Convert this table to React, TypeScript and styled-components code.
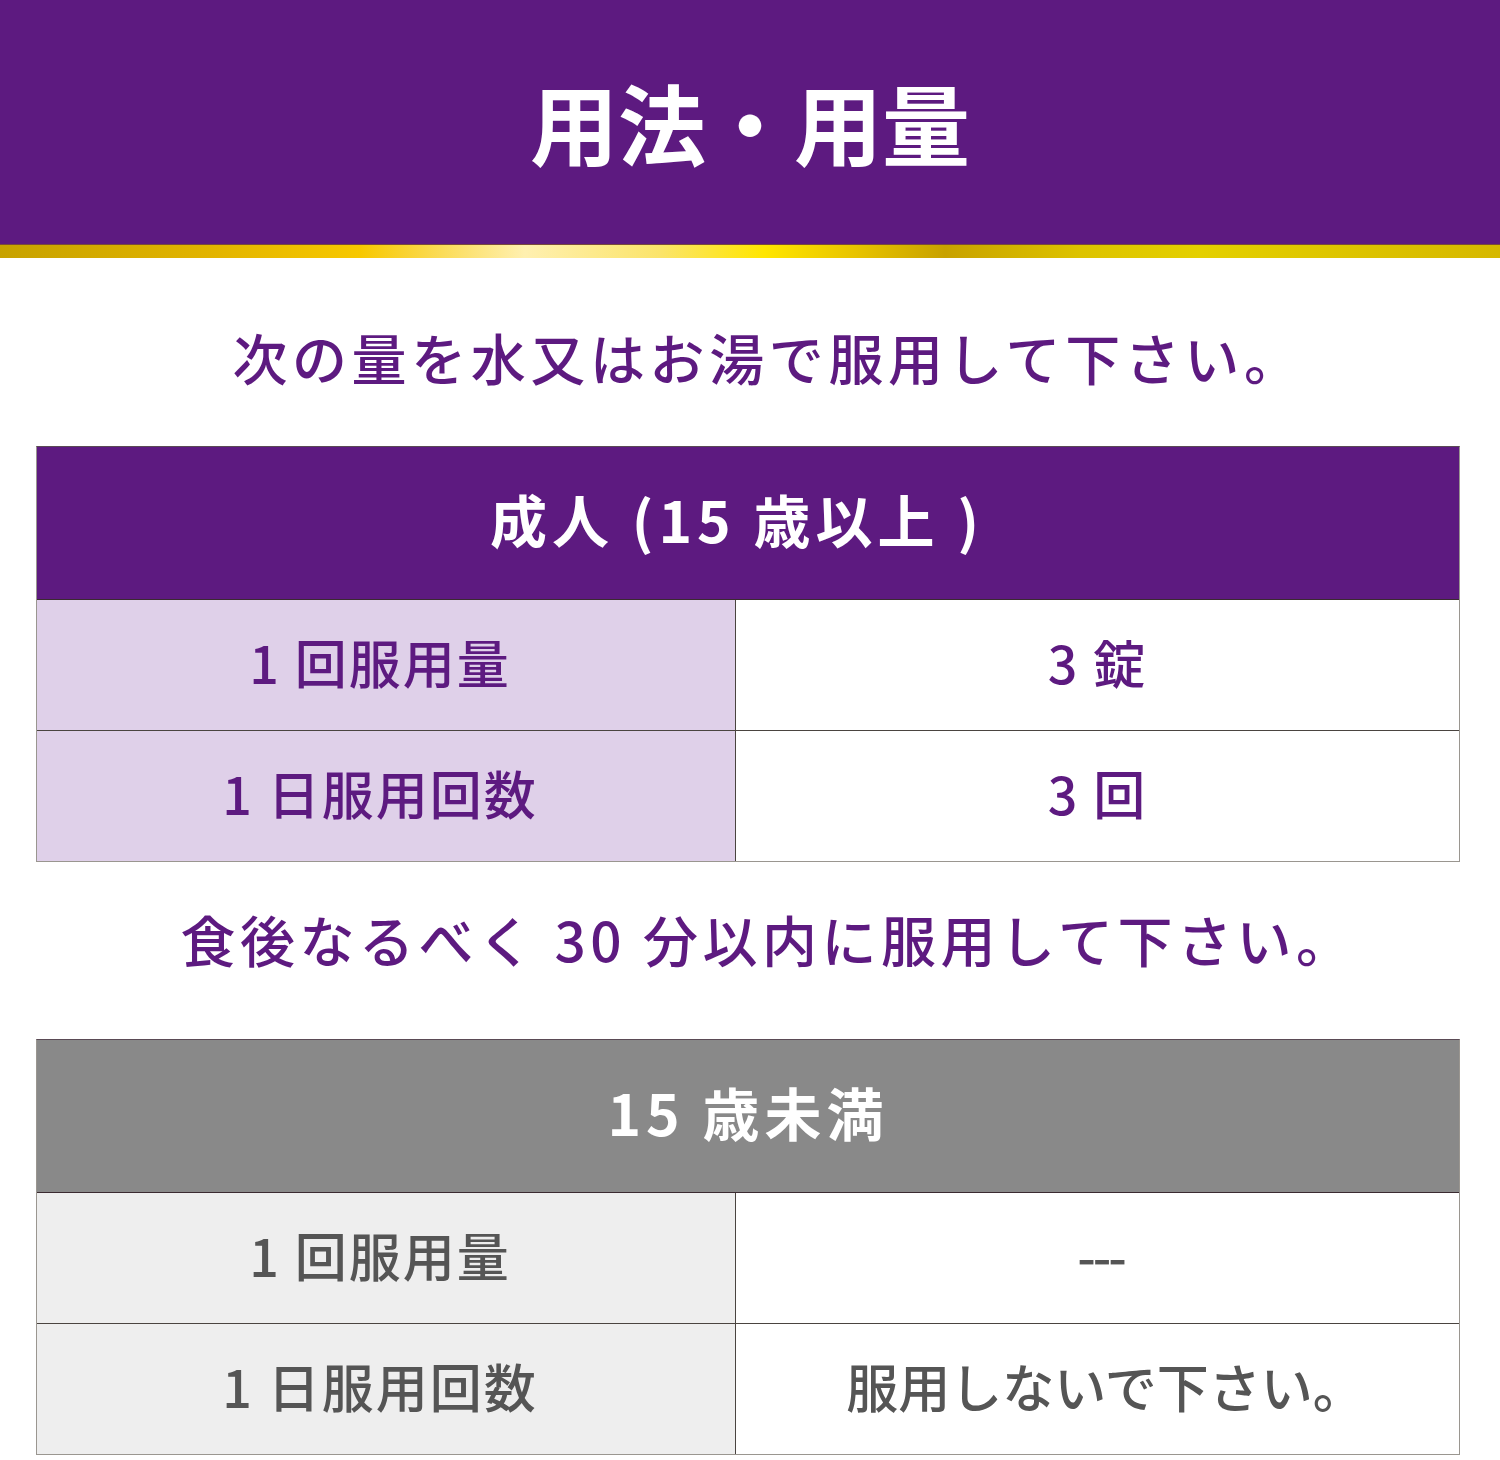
import React from "react"
import styled, { createGlobalStyle } from "styled-components"

const GlobalStyle = createGlobalStyle`
  html, body {
    margin: 0;
    padding: 0;
    background: #ffffff;
  }
  body {
    font-family: "Noto Sans CJK JP", "Noto Sans", sans-serif;
  }
`

const purple = "#5d1a80"

const Page = styled.div`
  width: 1500px;
  height: 1460px;
  display: flex;
  flex-direction: column;
  overflow: hidden;
  background: #ffffff;
`

const Banner = styled.header`
  height: 244px;
  background: ${purple};
  display: flex;
  align-items: center;
  justify-content: center;
`

const BannerTitle = styled.h1`
  margin: 0;
  color: #ffffff;
  font-family: "Noto Sans CJK JP", sans-serif;
  font-weight: 700;
  font-size: 88px;
  line-height: 1;
  letter-spacing: 0;
  padding-bottom: 2px;
`

const GoldBar = styled.div`
  height: 13px;
  background: linear-gradient(
    90deg,
    #c7a200 0%,
    #e2b400 14%,
    #f7c800 24%,
    #fff0b0 35%,
    #fbe46a 44%,
    #ffe600 51%,
    #e8c400 57%,
    #c8a200 63%,
    #ddc300 72%,
    #e4d000 80%,
    #d6b800 100%
  );
  border-top: 1px solid #7a4a3a;
`

const Lead = styled.p<{ $top: number; $bottom: number; $spacing: number }>`
  margin: ${(p) => p.$top}px 0 ${(p) => p.$bottom}px;
  padding-left: 36px;
  text-align: center;
  color: ${purple};
  font-family: "Noto Sans CJK JP", sans-serif;
  font-weight: 500;
  font-size: 55px;
  line-height: 80px;
  letter-spacing: ${(p) => p.$spacing}px;
`

const Table = styled.div`
  margin: 0 40px 0 36px;
  width: 1424px;
  box-sizing: border-box;
  border: 1px solid #9a9690;
  border-top-color: #5a4a55;
  display: grid;
  grid-template-columns: 699px 1fr;
`

const TableHead = styled.div<{ $bg: string; $shift: number }>`
  grid-column: 1 / -1;
  height: 153px;
  box-sizing: border-box;
  padding: 0 ${(p) => p.$shift}px 10px 0;
  background: ${(p) => p.$bg};
  border-bottom: 1px solid #3a2a30;
  display: flex;
  align-items: center;
  justify-content: center;
  color: #ffffff;
  font-weight: 700;
  font-size: 57px;
  letter-spacing: 5px;
`

const Cell = styled.div<{ $bg: string; $color: string; $label?: boolean; $last?: boolean; $spacing?: number; $indent?: number }>`
  height: ${(p) => (p.$last ? 130 : 131)}px;
  box-sizing: border-box;
  padding: 0 ${(p) => (p.$label ? 12 : 0)}px 8px ${(p) => p.$indent ?? 0}px;
  background: ${(p) => p.$bg};
  color: ${(p) => p.$color};
  display: flex;
  align-items: center;
  justify-content: center;
  font-weight: 500;
  font-size: 52px;
  letter-spacing: ${(p) => p.$spacing ?? 2}px;
  border-bottom: ${(p) => (p.$last ? "none" : "1px solid #4a4440")};
  border-right: ${(p) => (p.$label ? "1px solid #4a4440" : "none")};
`

type Row = { label: string; value: string; spacing?: number; indent?: number }

const DoseTable: React.FC<{
  title: string
  headBg: string
  headShift?: number
  labelBg: string
  color: string
  rows: Row[]
}> = ({ title, headBg, headShift = 0, labelBg, color, rows }) => (
  <Table>
    <TableHead $bg={headBg} $shift={headShift}>
      {title}
    </TableHead>
    {rows.map((r, i) => {
      const last = i === rows.length - 1
      return (
        <React.Fragment key={r.label}>
          <Cell $bg={labelBg} $color={color} $label $last={last}>
            {r.label}
          </Cell>
          <Cell $bg="#ffffff" $color={color} $last={last} $spacing={r.spacing} $indent={r.indent}>
            {r.value}
          </Cell>
        </React.Fragment>
      )
    })}
  </Table>
)

const App: React.FC = () => {
  return (
    <Page>
      <GlobalStyle />
      <Banner>
        <BannerTitle>用法・用量</BannerTitle>
      </Banner>
      <GoldBar />
      <Lead $top={58} $bottom={50} $spacing={4.6}>
        次の量を水又はお湯で服用して下さい。
      </Lead>
      <DoseTable
        title="成人 (15 歳以上 )"
        headBg={purple}
        headShift={22}
        labelBg="#dfd0e9"
        color={purple}
        rows={[
          { label: "1 回服用量", value: "3 錠" },
          { label: "1 日服用回数", value: "3 回" },
        ]}
      />
      <Lead $top={36} $bottom={61} $spacing={4.5}>
        食後なるべく 30 分以内に服用して下さい。
      </Lead>
      <DoseTable
        title="15 歳未満"
        headBg="#898989"
        labelBg="#eeeeee"
        color="#555555"
        rows={[
          { label: "1 回服用量", value: "---", spacing: -3, indent: 6 },
          { label: "1 日服用回数", value: "服用しないで下さい。", spacing: 0, indent: 16 },
        ]}
      />
    </Page>
  )
}

export default App
